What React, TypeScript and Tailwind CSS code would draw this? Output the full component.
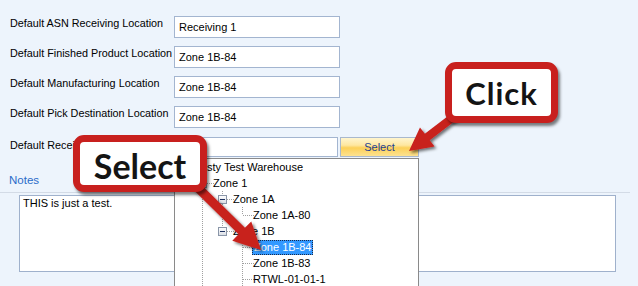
import React from "react";

type Cell = "none" | "line" | "tee" | "end" | "open";

type Node = {
  label: string;
  level: number;
  cells: Cell[];
  down?: boolean;
  up?: boolean;
  selected?: boolean;
};

const tree: Node[] = [
  { label: "Rusty Test Warehouse", level: 0, cells: ["open"], down: false, up: false },
  { label: "Zone 1", level: 1, cells: ["none", "open"], down: true, up: true },
  { label: "Zone 1A", level: 2, cells: ["none", "line", "open"], down: true, up: true },
  { label: "Zone 1A-80", level: 3, cells: ["none", "line", "line", "end"] },
  { label: "Zone 1B", level: 2, cells: ["none", "line", "open"], down: false, up: true },
  { label: "Zone 1B-84", level: 3, cells: ["none", "line", "none", "tee"], selected: true },
  { label: "Zone 1B-83", level: 3, cells: ["none", "line", "none", "tee"] },
  { label: "RTWL-01-01-1", level: 3, cells: ["none", "line", "none", "tee"] },
];

const fields = [
  { label: "Default ASN Receiving Location", value: "Receiving 1" },
  { label: "Default Finished Product Location", value: "Zone 1B-84" },
  { label: "Default Manufacturing Location", value: "Zone 1B-84" },
  { label: "Default Pick Destination Location", value: "Zone 1B-84" },
];

const dot = { stroke: "#a0a0a0", strokeWidth: 1, strokeDasharray: "1 1", shapeRendering: "crispEdges" as const };

const TreeCell = ({ kind, up, down }: { kind: Cell; up?: boolean; down?: boolean }) => (
  <svg width="20" height="16" className="shrink-0">
    {kind === "line" && <line x1="8.5" y1="0" x2="8.5" y2="16" {...dot} />}
    {kind === "tee" && (
      <>
        <line x1="8.5" y1="0" x2="8.5" y2="16" {...dot} />
        <line x1="9" y1="8.5" x2="20" y2="8.5" {...dot} />
      </>
    )}
    {kind === "end" && (
      <>
        <line x1="8.5" y1="0" x2="8.5" y2="8" {...dot} />
        <line x1="9" y1="8.5" x2="20" y2="8.5" {...dot} />
      </>
    )}
    {kind === "open" && (
      <>
        {up && <line x1="8.5" y1="0" x2="8.5" y2="4" {...dot} />}
        {down && <line x1="8.5" y1="13" x2="8.5" y2="16" {...dot} />}
        <line x1="13" y1="8.5" x2="20" y2="8.5" {...dot} />
        <defs>
          <linearGradient id="exp" x1="0" y1="0" x2="0" y2="1">
            <stop offset="0" stopColor="#ffffff" />
            <stop offset="1" stopColor="#d9dde4" />
          </linearGradient>
        </defs>
        <rect x="4.5" y="4.5" width="8" height="8" fill="url(#exp)" stroke="#8a96a8" shapeRendering="crispEdges" />
        <line x1="6" y1="8.5" x2="11" y2="8.5" stroke="#1e3160" shapeRendering="crispEdges" />
      </>
    )}
  </svg>
);

// polygon points for a straight arrow from (x1,y1) to tip (x2,y2)
const arrow = (x1: number, y1: number, x2: number, y2: number, shaft: number, head: number, headLen: number) => {
  const len = Math.hypot(x2 - x1, y2 - y1);
  const dx = (x2 - x1) / len;
  const dy = (y2 - y1) / len;
  const px = -dy;
  const py = dx;
  const bx = x2 - dx * headLen;
  const by = y2 - dy * headLen;
  const pts = [
    [x1 + px * shaft, y1 + py * shaft],
    [bx + px * shaft, by + py * shaft],
    [bx + px * head, by + py * head],
    [x2, y2],
    [bx - px * head, by - py * head],
    [bx - px * shaft, by - py * shaft],
    [x1 - px * shaft, y1 - py * shaft],
  ];
  return pts.map((p) => p.join(",")).join(" ");
};

const App = () => {
  return (
    <div className="relative w-[638px] h-[286px] overflow-hidden bg-[#edf4fc] font-['Liberation_Sans',Arial,sans-serif] text-[11px] leading-[13px] text-black">
      <div className="flex flex-col gap-[8px] pt-[16px] pl-[10px]">
        {fields.map((f) => (
          <div key={f.label} className="flex h-[22px] items-start">
            <div className="w-[164px] pt-px text-[10.8px] whitespace-nowrap">{f.label}</div>
            <div className="flex h-[22px] w-[166px] items-center border border-[#a3b5d0] bg-white px-[4px]">{f.value}</div>
          </div>
        ))}
        <div className="flex h-[22px] items-center">
          <div className="w-[164px] self-start pt-[3px] text-[10.8px] whitespace-nowrap">Default Receiving Location</div>
          <div className="h-[20px] w-[164px] border border-[#a3b5d0] bg-white" />
          <button className="ml-[2px] flex h-[20px] w-[79px] items-center justify-center border border-[#a9b8cd] bg-[linear-gradient(to_bottom,#fff5cf_0%,#fee7a0_40%,#fcd058_55%,#fde290_100%)] text-[#1c3f94]">
            Select
          </button>
        </div>
      </div>

      <div className="mt-[16px] pl-[9px] text-[11.5px] text-[#2a6bc9]">Notes</div>
      <div className="mt-[5px] h-px w-[630px] bg-[#d3dbe6]" />
      <div className="mt-[2px] ml-[19px] h-[77px] w-[597px] border border-[#9fb1cc] bg-white px-[3px] pt-px">THIS is just a test.</div>

      {/* dropdown tree */}
      <div className="absolute left-[174px] top-[158px] h-[140px] w-[245px] overflow-hidden border border-[#8a8a8a] bg-white">
        <div className="-ml-px flex flex-col">
          {tree.map((n) => (
            <div key={n.label} className="flex h-[16px] items-center">
              {n.cells.map((c, i) => (
                <TreeCell key={i} kind={c} up={n.up} down={n.down} />
              ))}
              <span
                className={
                  n.selected
                    ? "-ml-[2px] border border-dotted border-[#1a2a4a] bg-[#3399ff] px-px leading-[13px] text-white"
                    : "-ml-px whitespace-nowrap"
                }
              >
                {n.label}
              </span>
            </div>
          ))}
        </div>
      </div>

      {/* arrows */}
      <svg className="pointer-events-none absolute left-0 top-0" width="638" height="286">
        <defs>
          <filter id="sh" x="-20%" y="-20%" width="140%" height="140%">
            <feDropShadow dx="2" dy="2" stdDeviation="1.5" floodColor="#000" floodOpacity="0.55" />
          </filter>
        </defs>
        <polygon points={arrow(188, 178, 261, 250, 4.5, 13.5, 27)} fill="#c8201e" filter="url(#sh)" />
        <polygon points={arrow(460, 112, 409, 151, 4, 12, 23)} fill="#c8201e" filter="url(#sh)" />
      </svg>

      {/* callouts */}
      <div className="absolute left-[73px] top-[135px] flex h-[57px] w-[134px] items-center justify-center rounded-[11px] border-[7px] border-[#c8201e] bg-white pt-[5px] font-['Lato',sans-serif] text-[34px] font-bold leading-none text-[#141414] shadow-[2px_3px_3px_rgba(0,0,0,0.5)]">
        Select
      </div>
      <div className="absolute left-[445px] top-[62px] flex h-[61px] w-[113px] items-center justify-center rounded-[11px] border-[7px] border-[#c8201e] bg-white pt-[2px] font-['Lato',sans-serif] text-[31px] font-bold leading-none tracking-[1px] text-[#141414] shadow-[2px_3px_3px_rgba(0,0,0,0.5)]">
        Click
      </div>
    </div>
  );
};

export default App;
